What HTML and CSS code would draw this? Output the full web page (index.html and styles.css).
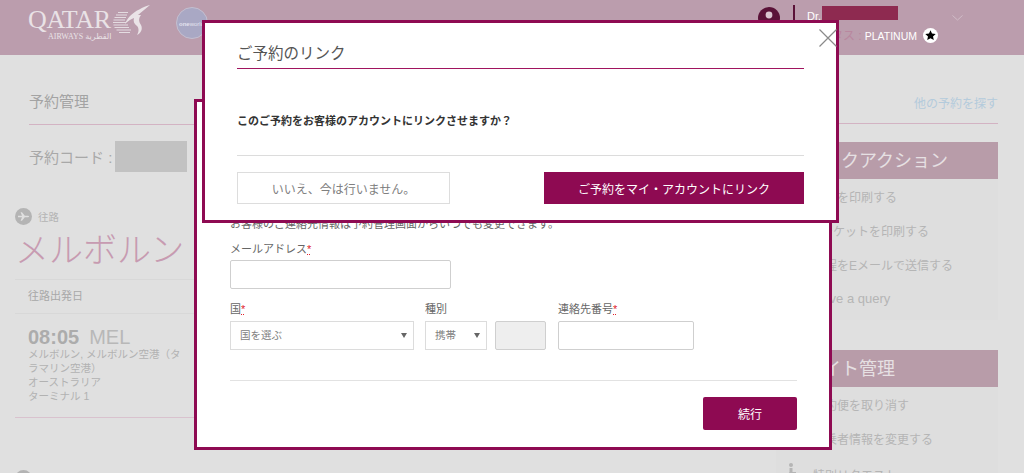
FILE: index.html
```html
<!DOCTYPE html>
<html lang="ja">
<head>
    <meta charset="UTF-8">
    <meta name="viewport" content="width=device-width, initial-scale=1.0">
    <title>予約管理</title>
    <link rel="stylesheet" href="styles.css">
</head>
<body>
    <div class="topBar">
        <div class="logo">
            <div class="logoWords">
                <div class="logoName">QATAR</div>
                <div class="logoSub">AIRWAYS <span class="logoArabic">القطرية</span></div>
            </div>
            <svg class="logoBird" width="38" height="32" viewBox="0 0 38 32">
                <path d="M5 8.5H15M3 11H14M1.5 13.5H13M.5 16H12M0 18.5H13M.5 21H15M1.5 23.5H16M3.5 26H18M6 28.5H17" stroke="#e4dce1" stroke-width="1.2" fill="none"/>
                <path d="M37 1 C30 3 22 7 17 12 C15 14 13 17 12 20 C15 17 18 15 21 14 C20 17 21 20 24 22 C26 24 26 28 24 31 C28 29 30 25 28 21 C26 18 25 15 28 11 L25 11 C29 8 33 4 37 1Z" fill="#eae3e7"/>
            </svg>
        </div>
        <div class="globe"><span class="globeText">one</span>world</div>
        <div class="userArea">
            <svg class="avatar" width="22" height="22" viewBox="0 0 22 22">
                <circle cx="11" cy="11" r="11" fill="#5a1238"/>
                <circle cx="11" cy="8" r="3.4" fill="#d9c4cf"/>
                <path d="M4.5 18 C5 13.5 17 13.5 17.5 18Z" fill="#d9c4cf"/>
            </svg>
            <div class="userDivider"></div>
            <div class="userInfo">
                <div class="userName">Dr.<span class="redacted"></span></div>
                <div class="userTier">
                    <span class="tierLabel">ステータス :</span>
                    <span class="tierValue">PLATINUM</span>
                    <svg class="tierStar" width="15" height="15" viewBox="0 0 15 15">
                        <circle cx="7.5" cy="7.5" r="7.5" fill="#fff"/>
                        <path d="M7.5 2.2 9 5.6 12.7 6 10 8.4 10.8 12 7.5 10.2 4.2 12 5 8.4 2.3 6 6 5.6Z" fill="#000"/>
                    </svg>
                </div>
            </div>
            <svg class="chevron" width="11" height="6" viewBox="0 0 11 6">
                <path d="M.5.5 5.5 5 10.5.5" fill="none" stroke="#d0bcc7" stroke-width="1"/>
            </svg>
        </div>
    </div>

    <div class="pageBody">
        <div class="mainCol">
            <div class="pageTitle">予約管理</div>
            <div class="bookingCode">
                <span>予約コード :</span>
                <span class="codeBox"></span>
            </div>
            <div class="dirRow">
                <svg width="17" height="17" viewBox="0 0 17 17">
                    <circle cx="8.5" cy="8.5" r="8.5" fill="#b4b4b4"/>
                    <path d="M3 7.8H7L5.6 4.2H7L9.8 7.8H13C14.4 7.8 14.4 9.2 13 9.2H9.8L7 12.8H5.6L7 9.2H3Z" fill="#e0e0e0"/>
                </svg>
                <span>往路</span>
            </div>
            <div class="cityName">メルボルン</div>
            <div class="dateLabel">往路出発日</div>
            <div class="flightInfo">
                <div class="flightTime"><b>08:05</b><span class="airport">MEL</span></div>
                <div class="flightAddr">メルボルン, メルボルン空港（タラマリン空港）<br>オーストラリア<br>ターミナル 1</div>
            </div>
            <div class="nextDot"></div>
        </div>
        <div class="sideCol">
            <a class="otherBooking">他の予約を探す</a>
            <div class="sideBox firstBox">
                <div class="sideHead">クイックアクション</div>
                <div class="sideItem">旅程を印刷する</div>
                <div class="sideItem">Eチケットを印刷する</div>
                <div class="sideItem">旅程をEメールで送信する</div>
                <div class="sideItem latinItem">Have a query</div>
            </div>
            <div class="sideBox">
                <div class="sideHead">フライト管理</div>
                <div class="sideItem">予約便を取り消す</div>
                <div class="sideItem">搭乗者情報を変更する</div>
                <div class="sideItem lastItem">
                    <svg class="seatIcon" width="14" height="16" viewBox="0 0 14 16">
                        <circle cx="7" cy="2" r="2" fill="#b5b5b5"/>
                        <path d="M5.5 5H8.5V9H12V10.5H8.5L10 16H8L6.5 11 3 16H1L5.5 9Z" fill="#b5b5b5"/>
                    </svg>
                    <span>特別リクエスト</span>
                </div>
            </div>
        </div>
    </div>

    <!-- 連絡先のモーダル -->
    <div class="modal contactModal">
        <p class="contactNote">お客様のご連絡先情報は予約管理画面からいつでも変更できます。</p>
        <label class="fieldLabel">メールアドレス<span class="req">*</span></label>
        <input class="textInput emailInput" type="text">
        <div class="phoneRow">
            <div>
                <label class="fieldLabel">国<span class="req">*</span></label>
                <div class="fakeSelect countrySelect"><span class="selectText">国を選ぶ</span><span class="arrow"></span></div>
            </div>
            <div class="typeField">
                <label class="fieldLabel">種別</label>
                <div class="fakeSelect typeSelect"><span class="selectText">携帯</span><span class="arrow"></span></div>
            </div>
            <div class="codeField">
                <input class="textInput dialInput" type="text" disabled>
            </div>
            <div class="numberField">
                <label class="fieldLabel">連絡先番号<span class="req">*</span></label>
                <input class="textInput phoneInput" type="text">
            </div>
        </div>
        <div class="contactFoot">
            <button class="btnContinue">続行</button>
        </div>
    </div>

    <!-- 予約リンクのモーダル -->
    <div class="modal linkModal">
        <svg class="closeX" width="18" height="18" viewBox="0 0 18 18">
            <path d="M.5.5 17.5 17.5M17.5.5.5 17.5" stroke="#8a8a8a" stroke-width="1.2" fill="none"/>
        </svg>
        <div class="linkTitle">ご予約のリンク</div>
        <div class="linkQuestion">このご予約をお客様のアカウントにリンクさせますか？</div>
        <div class="linkButtons">
            <button class="btnLater">いいえ、今は行いません。</button>
            <button class="btnLink">ご予約をマイ・アカウントにリンク</button>
        </div>
    </div>
</body>
</html>
```

FILE: styles.css
```css
body {
  margin: 0;
  height: 473px;
  overflow: hidden;
  position: relative;
  background-color: #e0e0e0;
  font-family: "Liberation Sans", "Noto Sans CJK JP", sans-serif;
  color: #333;
}

/* header */
.topBar {
  display: flex;
  height: 55px;
  padding-left: 28px;
  background-color: #bb9dad;
}
.logo {
  display: flex;
  width: 148px;
}
.logoWords {
  width: 85px;
  padding-top: 9px;
  color: #e9e2e6;
}
.logoName {
  font-family: "Liberation Serif", serif;
  font-size: 26px;
  line-height: 22px;
  letter-spacing: -0.4px;
}
.logoSub {
  font-family: "Liberation Serif", serif;
  font-size: 8px;
  line-height: 11px;
  padding-left: 20px;
  white-space: nowrap;
}
.logoArabic {
  font-family: "DejaVu Sans", sans-serif;
  font-size: 8px;
}
.logoBird {
  margin-top: 4px;
}
.globe {
  box-sizing: border-box;
  width: 32px;
  height: 32px;
  margin-top: 7px;
  border-radius: 50%;
  background-color: #a9a8c4;
  border: 1px solid #c4bfd0;
  color: #e4e2ee;
  font-size: 6px;
  line-height: 33px;
  padding-left: 2px;
  white-space: nowrap;
  overflow: hidden;
}
.globeText {
  font-weight: bold;
}
.userArea {
  display: flex;
  margin-left: 550px;
}
.avatar {
  margin-top: 7px;
}
.userDivider {
  width: 2px;
  height: 32px;
  margin: 5px 12px 0 13px;
  background-color: #5a1238;
}
.userInfo {
  width: 135px;
  padding-top: 6px;
  font-size: 11px;
  color: #fff;
}
.userName {
  display: flex;
  height: 14px;
  line-height: 20px;
}
.redacted {
  display: block;
  width: 76px;
  height: 14px;
  margin-left: 1px;
  background-color: #8e2a50;
}
.userTier {
  display: flex;
  justify-content: flex-end;
  width: 131px;
  margin-top: 6px;
  white-space: nowrap;
}
.tierLabel {
  flex-shrink: 0;
  color: #b9879f;
  font-size: 12px;
  line-height: 20px;
}
.tierValue {
  flex-shrink: 0;
  margin: 0 6px 0 3px;
  font-size: 10.5px;
  line-height: 20px;
}
.tierStar {
  flex-shrink: 0;
  margin-top: 2px;
}
.chevron {
  margin-top: 15px;
  margin-left: 10px;
}

/* page */
.pageBody {
  display: flex;
  justify-content: space-between;
  padding: 0 26px 0 15px;
}
.mainCol {
  width: 400px;
}
.pageTitle {
  margin-left: 14px;
  padding-top: 36px;
  height: 33px;
  font-size: 15px;
  line-height: 21px;
  color: #a3a3a3;
  border-bottom: 1px solid #d3b3c3;
}
.bookingCode {
  display: flex;
  margin-left: 14px;
  margin-top: 16px;
  height: 31px;
  font-size: 15px;
  line-height: 34px;
  color: #a8a8a8;
}
.codeBox {
  display: block;
  width: 72px;
  height: 31px;
  margin-left: 3px;
  background-color: #c2c2c2;
}
.dirRow {
  display: flex;
  align-items: center;
  gap: 6px;
  margin-top: 36px;
  height: 17px;
  font-size: 10.5px;
  color: #b4b4b4;
}
.cityName {
  margin-top: 1px;
  height: 53px;
  font-size: 34px;
  font-weight: 300;
  line-height: 48px;
  color: #c79bb1;
  border-bottom: 1px solid #d8d8d8;
}
.dateLabel {
  padding-left: 13px;
  height: 33px;
  font-size: 11px;
  line-height: 33px;
  color: #a8a8a8;
  border-bottom: 1px solid #d8d8d8;
}
.flightInfo {
  box-sizing: border-box;
  height: 104px;
  padding: 13px 0 0 13px;
  border-bottom: 1px solid #d9c2ce;
  color: #b2b2b2;
}
.flightTime {
  font-size: 20px;
  line-height: 20px;
  color: #acacac;
}
.airport {
  margin-left: 10px;
  color: #b8b8b8;
}
.flightAddr {
  width: 154px;
  font-size: 10.5px;
  line-height: 14px;
}
.nextDot {
  width: 17px;
  height: 17px;
  margin-top: 52px;
  border-radius: 50%;
  background-color: #b4b4b4;
}

.sideCol {
  width: 222px;
}
.otherBooking {
  display: block;
  box-sizing: border-box;
  height: 69px;
  margin-left: -150px;
  padding-top: 40px;
  font-size: 12px;
  line-height: 18px;
  text-align: right;
  color: #b4cbdc;
  border-bottom: 1px solid #d3b3c3;
}
.sideBox {
  background-color: #dedede;
}
.firstBox {
  margin-top: 18px;
  height: 178px;
  margin-bottom: 30px;
}
.sideHead {
  height: 37px;
  padding-left: 11px;
  font-size: 18px;
  line-height: 39px;
  color: #e6e0e3;
  background-color: #b89ca9;
}
.sideItem {
  display: flex;
  align-items: center;
  height: 34px;
  padding-left: 37px;
  font-size: 12px;
  color: #b5b5b5;
}
.latinItem {
  font-size: 13px;
}
.lastItem {
  position: relative;
  padding-top: 2px;
}
.seatIcon {
  position: absolute;
  left: 8px;
  top: 8px;
}

/* modals */
.modal {
  position: absolute;
  box-sizing: border-box;
  border: 3px solid #8e0a52;
  background-color: #fff;
}
.contactModal {
  left: 194px;
  top: 99px;
  width: 638px;
  height: 351px;
  padding: 114px 32px 0 33px;
}
.contactNote {
  margin: 0;
  font-size: 11px;
  line-height: 16px;
  color: #666;
}
.fieldLabel {
  display: block;
  font-size: 11px;
  line-height: 18px;
  color: #666;
}
.contactModal > .fieldLabel {
  margin-top: 8px;
}
.req {
  color: #e0222c;
  text-decoration: underline dotted;
}
.textInput {
  display: block;
  box-sizing: border-box;
  height: 29px;
  margin: 2px 0 0;
  padding: 0 8px;
  background-color: #fff;
  border: 1px solid #cfcfcf;
  border-radius: 2px;
}
.emailInput {
  width: 221px;
}
.phoneRow {
  display: flex;
  align-items: flex-end;
  margin-top: 11px;
}
.phoneRow .fieldLabel {
  margin-bottom: 3px;
}
.phoneRow .textInput {
  margin-top: 0;
}
.fakeSelect {
  display: flex;
  align-items: center;
  justify-content: space-between;
  box-sizing: border-box;
  height: 29px;
  padding: 0 6px 0 9px;
  font-size: 10.5px;
  color: #808080;
  background-color: #fff;
  border: 1px solid #dcdcdc;
}
.selectText {
  margin-bottom: 3px;
}
.countrySelect {
  width: 184px;
}
.typeField {
  margin-left: 11px;
}
.typeSelect {
  width: 62px;
}
.arrow {
  width: 0;
  height: 0;
  border-left: 3px solid transparent;
  border-right: 3px solid transparent;
  border-top: 5px solid #666;
}
.codeField {
  margin-left: 8px;
}
.dialInput {
  width: 51px;
  background-color: #eee;
}
.numberField {
  margin-left: 12px;
}
.phoneInput {
  width: 136px;
}
.contactFoot {
  display: flex;
  justify-content: flex-end;
  margin-top: 30px;
  padding-top: 16px;
  border-top: 1px solid #e2e2e2;
}
.btnContinue {
  width: 94px;
  height: 33px;
  padding: 0;
  border: none;
  border-radius: 2px;
  font-family: inherit;
  font-size: 12px;
  color: #fff;
  background-color: #8e0a52;
}

.linkModal {
  left: 202px;
  top: 20px;
  width: 637px;
  height: 203px;
  padding: 0 32px;
}
.closeX {
  position: absolute;
  right: -1px;
  top: 6px;
}
.linkTitle {
  height: 45px;
  font-size: 15.5px;
  line-height: 61px;
  color: #555;
  border-bottom: 1.5px solid #a0145f;
  overflow: hidden;
}
.linkQuestion {
  height: 86px;
  font-size: 11px;
  font-weight: bold;
  line-height: 105px;
  color: #333;
  border-bottom: 1px solid #dcdcdc;
}
.linkButtons {
  display: flex;
  justify-content: space-between;
  margin-top: 16px;
}
.btnLater {
  width: 213px;
  height: 32px;
  padding: 0;
  border: 1px solid #ddd;
  font-family: inherit;
  font-size: 12px;
  color: #808080;
  background-color: #fff;
}
.btnLink {
  width: 260px;
  height: 32px;
  padding: 0;
  border: none;
  font-family: inherit;
  font-size: 12px;
  color: #fff;
  background-color: #8e0a52;
}
```
